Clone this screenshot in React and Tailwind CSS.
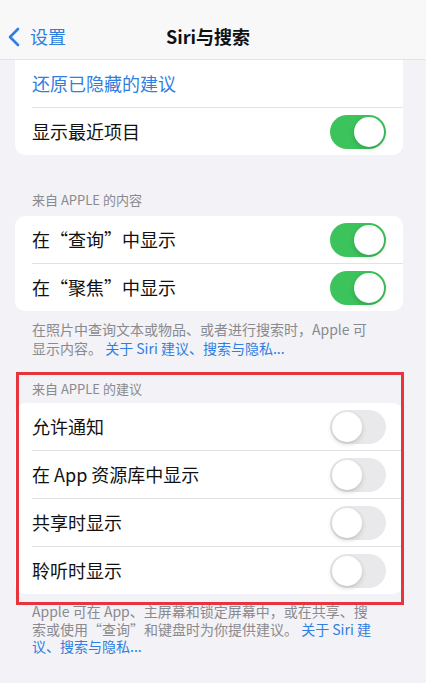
import React from 'react';

const font = { fontFamily: '"Noto Sans CJK SC", "Noto Sans", sans-serif' };

const Toggle = ({ on }) => (
  <div
    className={`relative w-[56px] h-[34px] rounded-full shrink-0 ${on ? 'bg-[#3cc35c]' : 'bg-[#e9e9eb]'}`}
  >
    <div
      className={`absolute top-[2px] w-[30px] h-[30px] rounded-full bg-white shadow-[0_2px_5px_rgba(0,0,0,0.18)] ${on ? 'right-[2px]' : 'left-[2px]'}`}
    />
  </div>
);

const Row = ({ label, on, blue, last }) => (
  <div className="flex flex-col">
    <div className="flex items-center justify-between h-[47px] pl-[17px] pr-[17px]">
      <span className={`text-[18px] ${blue ? 'text-[#2f7fe0]' : 'text-[#111]'}`}>{label}</span>
      {on !== undefined && <Toggle on={on} />}
    </div>
    {!last && <div className="ml-[17px] h-px bg-[#e2e2e6]" />}
  </div>
);

const Header = ({ children, className = '' }) => (
  <div className={`pl-[17px] text-[13px] leading-[18px] text-[#8a8a8e] ${className}`}>{children}</div>
);

const Footer = ({ children, className = '' }) => (
  <div className={`pl-[17px] pr-[24px] pt-[9px] text-[14px] text-[#8a8a8e] ${className}`}>{children}</div>
);

export default function App() {
  return (
    <div className="w-[426px] h-[683px] bg-[#f2f2f7] overflow-hidden relative" style={font}>
      {/* 导航栏 */}
      <div className="h-[60px] bg-[#f8f8f8] border-b border-[#e4e4e6] flex items-center relative">
        <div className="flex items-center pl-[8px] pt-[14px] gap-[10px] text-[#2f7fe0]">
          <svg width="12" height="20" viewBox="0 0 12 20" fill="none">
            <path d="M10 2 L2 10 L10 18" stroke="#2f7fe0" strokeWidth="2.6" strokeLinecap="round" strokeLinejoin="round" />
          </svg>
          <span className="text-[18px]">设置</span>
        </div>
        <div className="absolute left-0 right-[10px] top-[14px] bottom-0 flex items-center justify-center text-[18px] font-bold text-[#111]">
          Siri与搜索
        </div>
      </div>

      <div className="ml-[15px] w-[388px]">
        <div className="bg-white rounded-b-[10px]">
          <Row label="还原已隐藏的建议" blue />
          <Row label="显示最近项目" on last />
        </div>

        <Header className="mt-[36px] mb-[7px]">来自 APPLE 的内容</Header>
        <div className="bg-white rounded-[10px]">
          <Row label="在“查询”中显示" on />
          <Row label="在“聚焦”中显示" on last />
        </div>
        <Footer className="leading-[18.5px]">
          在照片中查询文本或物品、或者进行搜索时，Apple 可显示内容。{' '}
          <span className="text-[#2f7fe0]">关于 Siri 建议、搜索与隐私...</span>
        </Footer>

        <Header className="mt-[23px] mb-[5px]">来自 APPLE 的建议</Header>
        <div className="bg-white rounded-[10px]">
          <Row label="允许通知" on={false} />
          <Row label="在 App 资源库中显示" on={false} />
          <Row label="共享时显示" on={false} />
          <Row label="聆听时显示" on={false} last />
        </div>
        <Footer className="leading-[17.5px]">
          Apple 可在 App、主屏幕和锁定屏幕中，或在共享、搜索或使用“查询”和键盘时为你提供建议。{' '}
          <span className="text-[#2f7fe0]">关于 Siri 建议、搜索与隐私...</span>
        </Footer>
      </div>

      {/* 标注框 */}
      <div className="absolute left-[16px] top-[372px] w-[388px] h-[233px] border-[3px] border-[#e8343c] pointer-events-none" />
    </div>
  );
}
